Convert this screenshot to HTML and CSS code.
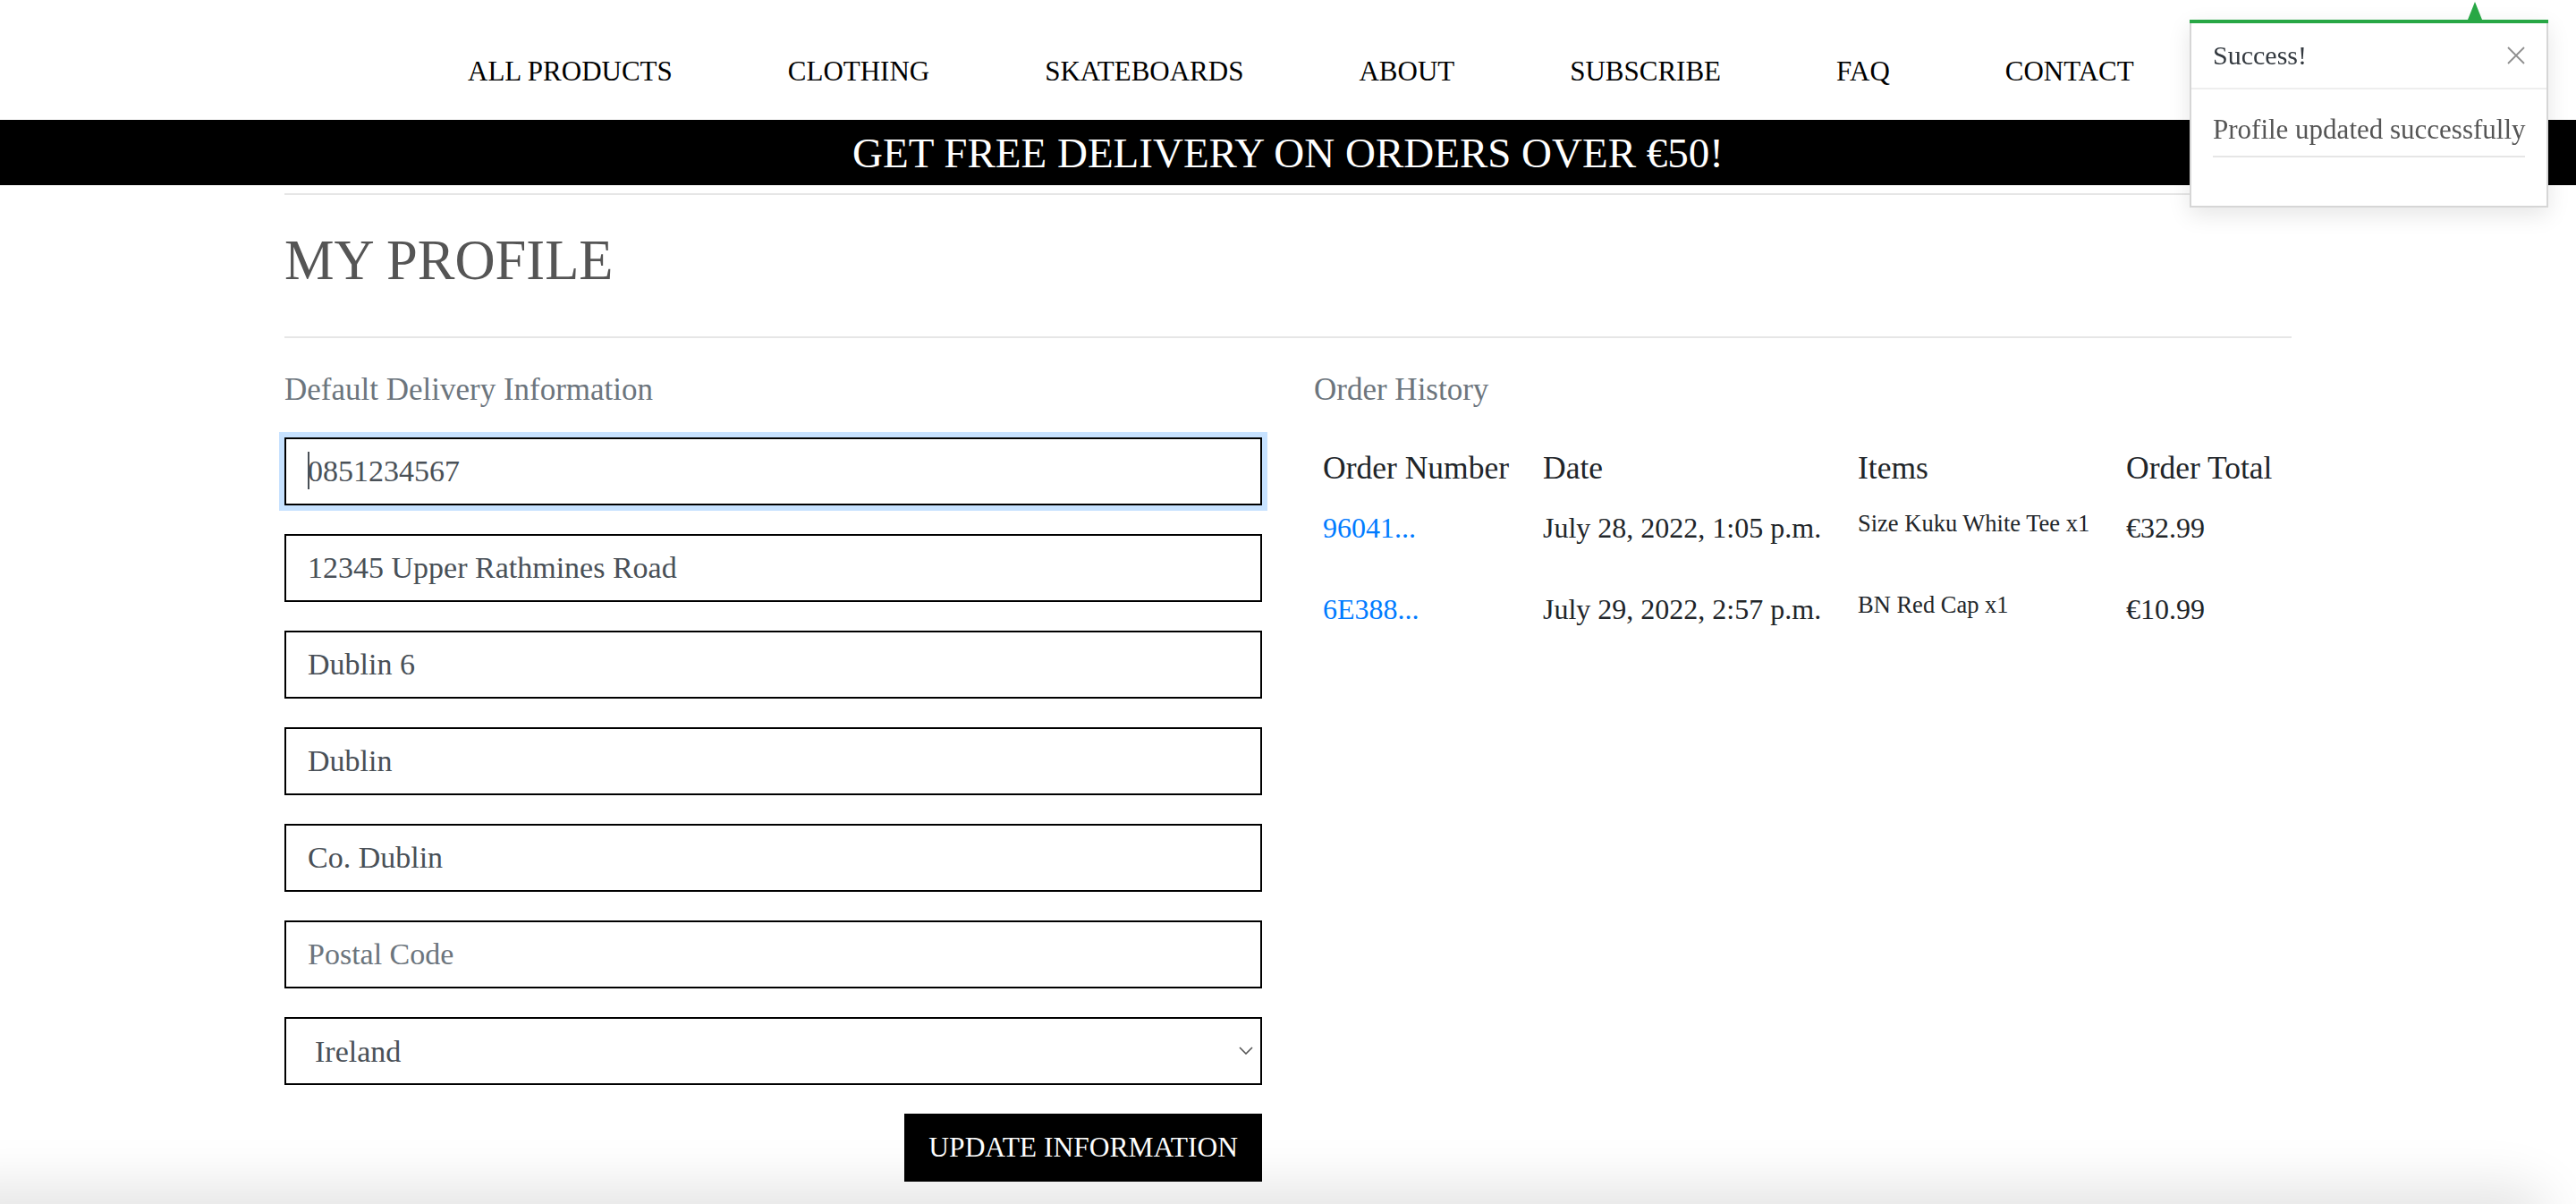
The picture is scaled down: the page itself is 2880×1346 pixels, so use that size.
FILE: index.html
```html
<!DOCTYPE html>
<html lang="en">
<head>
<meta charset="utf-8">
<title>My Profile</title>
<link rel="stylesheet" href="styles.css">
</head>
<body>
<header class="site-header">
  <nav class="main-nav">
    <a href="#" class="nav-link">ALL PRODUCTS</a>
    <a href="#" class="nav-link">CLOTHING</a>
    <a href="#" class="nav-link">SKATEBOARDS</a>
    <a href="#" class="nav-link">ABOUT</a>
    <a href="#" class="nav-link">SUBSCRIBE</a>
    <a href="#" class="nav-link">FAQ</a>
    <a href="#" class="nav-link">CONTACT</a>
  </nav>
</header>
<div class="delivery-banner">
  <h4 class="banner-text">GET FREE DELIVERY ON ORDERS OVER €50!</h4>
</div>
<main class="container">
  <hr class="rule">
  <h2 class="page-title">MY PROFILE</h2>
  <hr class="rule">
  <div class="profile-row">
    <section class="profile-col">
      <p class="muted">Default Delivery Information</p>
      <form class="profile-form">
        <div class="field focused">
          <input class="form-control" type="text" value="0851234567">
          <span class="caret"></span>
        </div>
        <div class="field">
          <input class="form-control" type="text" value="12345 Upper Rathmines Road">
        </div>
        <div class="field">
          <input class="form-control" type="text" value="Dublin 6">
        </div>
        <div class="field">
          <input class="form-control" type="text" value="Dublin">
        </div>
        <div class="field">
          <input class="form-control" type="text" value="Co. Dublin">
        </div>
        <div class="field">
          <input class="form-control" type="text" placeholder="Postal Code">
        </div>
        <div class="field select-field">
          <select class="form-control select-control">
            <option>Ireland</option>
          </select>
          <svg class="chevron" viewBox="0 0 16 9" width="16" height="9" aria-hidden="true">
            <polyline points="1,1 8,8 15,1" fill="none" stroke="#555" stroke-width="1.6"/>
          </svg>
        </div>
        <div class="form-actions">
          <button type="button" class="btn-black">UPDATE INFORMATION</button>
        </div>
      </form>
    </section>
    <section class="profile-col">
      <p class="muted">Order History</p>
      <table class="order-table">
        <colgroup>
          <col class="col-number">
          <col class="col-date">
          <col class="col-items">
          <col class="col-total">
        </colgroup>
        <thead>
          <tr>
            <th>Order Number</th>
            <th>Date</th>
            <th>Items</th>
            <th>Order Total</th>
          </tr>
        </thead>
        <tbody>
          <tr>
            <td><a href="#" class="order-link">96041...</a></td>
            <td>July 28, 2022, 1:05 p.m.</td>
            <td><ul class="item-list"><li>Size Kuku White Tee x1</li></ul></td>
            <td>€32.99</td>
          </tr>
          <tr>
            <td><a href="#" class="order-link">6E388...</a></td>
            <td>July 29, 2022, 2:57 p.m.</td>
            <td><ul class="item-list"><li>BN Red Cap x1</li></ul></td>
            <td>€10.99</td>
          </tr>
        </tbody>
      </table>
    </section>
  </div>
</main>

<div class="message-container">
  <div class="toast">
    <div class="arrow-up"></div>
    <div class="toast-capper"></div>
    <div class="toast-header">
      <strong class="toast-title">Success!</strong>
      <button type="button" class="toast-close" aria-label="Close">
        <svg viewBox="0 0 20 20" width="20" height="20" aria-hidden="true">
          <path d="M1 1 L19 19 M19 1 L1 19" stroke="#8f8f8f" stroke-width="1.8" fill="none"/>
        </svg>
      </button>
    </div>
    <div class="toast-body">
      <div class="toast-msg">Profile updated successfully</div>
      <hr class="toast-hr">
    </div>
  </div>
</div>
<div class="bottom-shade"></div>
</body>
</html>
```

FILE: styles.css
```css
html, body {
  margin: 0;
  padding: 0;
  background: #fff;
}

body {
  font-family: "Liberation Serif", "Times New Roman", serif;
  color: #212529;
  overflow: hidden;
}

/* Header / navigation */
.site-header {
  height: 134px;
  box-sizing: border-box;
  padding-top: 56px;
  padding-left: 523px;
}

.main-nav {
  display: flex;
  gap: 129px;
}

.nav-link {
  font-size: 31px;
  line-height: 48px;
  color: #000;
  text-decoration: none;
  white-space: nowrap;
}

/* Delivery banner */
.delivery-banner {
  background: #000;
  height: 73px;
  text-align: center;
}

.banner-text {
  margin: 0;
  padding-top: 2px;
  font-size: 47px;
  line-height: 71px;
  font-weight: normal;
  color: #fff;
}

/* Main container */
.container {
  width: 2244px;
  margin: 0 auto;
  padding-top: 9px;
}

.rule {
  border: 0;
  height: 2px;
  margin: 0;
  background: #e6e6e6;
}

.page-title {
  margin: 35px 0 47px;
  font-size: 62.5px;
  line-height: 76px;
  font-weight: normal;
  color: #555;
}

.profile-row {
  display: flex;
  gap: 58px;
}

.profile-col {
  flex: 1 1 0;
  min-width: 0;
}

.muted {
  margin: 32px 0 28px;
  font-size: 35px;
  line-height: 51px;
  color: #6c757d;
}

/* Form */
.profile-form {
  margin: 0;
}

.field {
  position: relative;
  margin-bottom: 32px;
}

.form-control {
  display: block;
  width: 100%;
  height: 76px;
  box-sizing: border-box;
  padding: 0 24px;
  border: 2px solid #000;
  border-radius: 0;
  background: #fff;
  font-family: inherit;
  font-size: 34px;
  color: #495057;
  outline: none;
}

.form-control::placeholder {
  color: #6c757d;
  opacity: 1;
}

.field.focused .form-control {
  box-shadow: 0 0 0 6px rgba(0, 123, 255, 0.22);
}

.caret {
  position: absolute;
  left: 26px;
  top: 16px;
  width: 2px;
  height: 42px;
  background: #495057;
}

.select-control {
  appearance: none;
  -webkit-appearance: none;
  padding-left: 32px;
}

.chevron {
  position: absolute;
  right: 10px;
  top: 33px;
}

.form-actions {
  display: flex;
  justify-content: flex-end;
}

.btn-black {
  height: 76px;
  padding: 0 27px;
  border: 0;
  border-radius: 0;
  background: #000;
  color: #fff;
  font-family: inherit;
  font-size: 31.5px;
  cursor: pointer;
}

/* Order history table */
.order-table {
  width: 100%;
  border-collapse: collapse;
  table-layout: fixed;
}

.col-number { width: 246px; }
.col-date { width: 352px; }
.col-items { width: 300px; }
.col-total { width: auto; }

.order-table th {
  padding: 9.6px 10px;
  font-size: 35.5px;
  line-height: 48px;
  font-weight: normal;
  text-align: left;
  vertical-align: bottom;
  color: #212529;
  white-space: nowrap;
}

.order-table td {
  padding: 10px 10px 9.6px;
  font-size: 32px;
  line-height: 48px;
  vertical-align: top;
  color: #212529;
  white-space: nowrap;
}

.order-link {
  color: #007bff;
  text-decoration: none;
}

.item-list {
  list-style: none;
  margin: 0 0 32px;
  padding: 0;
}

.item-list li {
  font-size: 26.5px;
  line-height: 39px;
}

/* Toast */
.message-container {
  position: fixed;
  top: 22px;
  right: 31px;
  width: 401px;
  z-index: 100;
}

.toast {
  position: relative;
  box-sizing: border-box;
  background: #fff;
  border: 2px solid rgba(0, 0, 0, 0.16);
  border-top: 0;
  box-shadow: 0 8px 24px rgba(0, 0, 0, 0.1);
}

.arrow-up {
  position: absolute;
  top: -20px;
  right: 72px;
  width: 0;
  height: 0;
  border-left: 8px solid transparent;
  border-right: 8px solid transparent;
  border-bottom: 20px solid #28a745;
}

.toast-capper {
  height: 4px;
  margin: 0 -2px;
  background: #28a745;
}

.toast-header {
  display: flex;
  align-items: center;
  height: 56px;
  padding: 8px 24px;
  border-bottom: 2px solid #eeeeee;
}

.toast-title {
  flex: 1;
  font-size: 30px;
  line-height: 42px;
  font-weight: normal;
  color: #343a40;
}

.toast-close {
  display: flex;
  width: 20px;
  height: 20px;
  padding: 0;
  border: 0;
  background: none;
}

.toast-body {
  padding: 24px;
}

.toast-msg {
  font-size: 31px;
  line-height: 42px;
  color: #555;
  white-space: nowrap;
}

.toast-hr {
  height: 2px;
  margin: 8px 0 30px;
  border: 0;
  background: #e6e6e6;
}

/* Faint shadow along the bottom edge of the viewport */
.bottom-shade {
  position: fixed;
  left: -60px;
  right: 50px;
  bottom: -40px;
  height: 40px;
  border-radius: 40px;
  box-shadow: 0 0 60px 20px rgba(0, 0, 0, 0.11);
  pointer-events: none;
}
```
